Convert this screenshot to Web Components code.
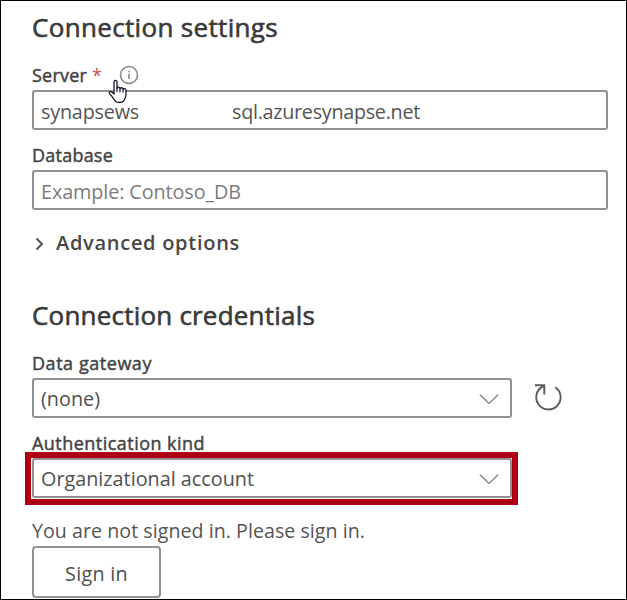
<!DOCTYPE html>
<html lang="en">
<head>
<meta charset="utf-8">
<title>Connection settings</title>
<style>
html,body{margin:0;width:627px;height:600px;overflow:hidden;background:#fff}
</style>
</head>
<body>
<connection-page></connection-page>
<script>
// Text line whose tracking adjusts to a given advance width.
class FitText extends HTMLElement {
  connectedCallback() {
    const root = this.attachShadow({mode: 'open'});
    root.innerHTML = '<style>:host{display:inline-block;white-space:pre}span{display:inline-block}</style><span><slot></slot></span>';
    const span = root.querySelector('span');
    const target = +this.getAttribute('w');
    const n = this.textContent.length;
    const delta = target - span.getBoundingClientRect().width;
    span.style.letterSpacing = (delta / n) + 'px';
  }
}
customElements.define('fit-text', FitText);

function define(name, html) {
  customElements.define(name, class extends HTMLElement {
    constructor() {
      super();
      this.attachShadow({mode: 'open'}).innerHTML = html;
    }
  });
}

define('section-title', `<style>
:host{display:block;height:32px;font-size:26px;line-height:31px;-webkit-text-stroke:.6px #3b3a39;color:#3b3a39}
</style><slot></slot>`);

define('field-label', `<style>
:host{display:flex;height:22px;font-size:18px;line-height:22px;-webkit-text-stroke:.45px #444342;color:#444342}
</style><slot></slot>`);

define('text-box', `<style>
:host{display:flex;align-items:center;box-sizing:border-box;height:40px;border:2px solid #929190;border-radius:3px;padding:3px 12px 0 7px;font-size:19.8px;line-height:28px;color:#555453;background:#fff}
:host([placeholder]){color:#7c7b7a}
</style><slot></slot>`);

define('drop-down', `<style>
:host{display:flex;align-items:center;justify-content:space-between;box-sizing:border-box;width:480px;height:40px;border:2px solid #929190;border-radius:3px;padding:1px 11px 0 7px;font-size:19.8px;line-height:28px;color:#504f4e;background:#fff}
svg{display:block;margin-top:1px}
</style><slot></slot><svg width="20" height="12" viewBox="0 0 20 12"><path d="M.8 1.5 10 10.5 19.2 1.5" fill="none" stroke="#8e9093" stroke-width="1.6"/></svg>`);

define('info-icon', `<style>:host{display:block}svg{display:block}</style>
<svg width="20" height="20" viewBox="0 0 20 20"><circle cx="10" cy="10" r="8.5" fill="none" stroke="#858483" stroke-width="1.5"/><path d="M10 8.7V14M10 5.8V7.3" stroke="#858483" stroke-width="1.5"/></svg>`);

define('hand-cursor', `<style>:host{display:block}svg{display:block}</style>
<svg width="20" height="26" viewBox="0 0 20 26"><path d="M6 15V3.4C6 .7 9 .7 9 3.4V9.5C9 7.6 12 7.7 12 9.8 12.2 8.2 15 8.4 15 10.4 15.3 9.1 18 9.4 18 11.5V16C18 18.3 16.5 19.8 16.2 21.3 15.3 23 13.3 23.5 11 23.5 7.8 23.5 6.3 21.4 5 19 3.7 16.7 2.1 15.5 1.4 14.5.7 13.2 2.4 11.9 3.8 13Z" fill="#fff" stroke="#11152b" stroke-width="1.3" stroke-linejoin="round"/><path d="M9 9V13M12 9.6V13.2M15 10.2V13.5" stroke="#11152b" stroke-width="1.2"/></svg>`);

define('refresh-icon', `<style>:host{display:block}svg{display:block}</style>
<svg width="30" height="30" viewBox="0 0 30 30"><path d="M22.3 5.2A12.2 12.2 0 1 1 10.8 4" fill="none" stroke="#5b5a59" stroke-width="1.9"/><path d="M2 3.3H11.3V12.5" fill="none" stroke="#5b5a59" stroke-width="1.9"/></svg>`);

define('sign-button', `<style>
:host{display:flex;align-items:center;justify-content:center;box-sizing:border-box;width:129px;height:52px;border:2px solid #929190;border-radius:4px;padding-top:4px;font-size:19.8px;line-height:28px;color:#504f4e}
</style><slot></slot>`);

define('connection-page', `<style>
:host{display:flex;flex-direction:column;box-sizing:border-box;width:627px;height:600px;border:1px solid #000;padding:11px 18px 0 31px;font-family:"Open Sans","Noto Sans",sans-serif;background:#fff}
.server{margin-top:20px;position:relative}
.star{color:#c45358;margin-left:5px;-webkit-text-stroke:0}
info-icon{margin:1px 0 0 17px}
hand-cursor{position:absolute;left:76px;top:15px;z-index:1}
text-box,drop-down{margin-top:4px}
.tail{margin-left:93px}
.adv{display:flex;align-items:center;margin-top:18px;height:30px;font-size:20px;line-height:30px;font-weight:600;color:#484746}
.adv svg{margin:2px 11px 0 3px}
.row{display:flex;align-items:center;gap:21px}
.row refresh-icon{margin-top:2px}
.mark{position:absolute;left:-7px;width:481px;height:41px;border:6px solid #ad0012}
.auth{position:relative}
.auth .mark{top:20px}
.note{height:28px;margin-top:19px;font-size:19.6px;line-height:28px;color:#555453}
sign-button{margin-top:1px}
</style>
<section-title><fit-text w="246">Connection settings</fit-text></section-title>
<field-label class="server"><fit-text w="55">Server</fit-text><span class="star">*</span><info-icon></info-icon><hand-cursor></hand-cursor></field-label>
<text-box><fit-text w="98">synapsews</fit-text><fit-text class="tail" w="188">sql.azuresynapse.net</fit-text></text-box>
<field-label style="margin-top:14px"><fit-text w="81">Database</fit-text></field-label>
<text-box placeholder><fit-text w="200">Example: Contoso_DB</fit-text></text-box>
<div class="adv"><svg width="10" height="14" viewBox="0 0 10 14"><path d="M1.5 1.5 7 7 1.5 12.5" fill="none" stroke="#555453" stroke-width="2"/></svg><fit-text w="184">Advanced options</fit-text></div>
<section-title style="margin-top:42px"><fit-text w="283">Connection credentials</fit-text></section-title>
<field-label style="margin-top:20px"><fit-text w="120">Data gateway</fit-text></field-label>
<div class="row"><drop-down><fit-text w="59">(none)</fit-text></drop-down><refresh-icon></refresh-icon></div>
<div class="auth" style="margin-top:14px"><field-label><fit-text w="173">Authentication kind</fit-text></field-label>
<drop-down><fit-text w="213">Organizational account</fit-text></drop-down><div class="mark"></div></div>
<div class="note"><fit-text w="333">You are not signed in. Please sign in.</fit-text></div>
<sign-button><fit-text w="63">Sign in</fit-text></sign-button>
`);
</script>
</body>
</html>
